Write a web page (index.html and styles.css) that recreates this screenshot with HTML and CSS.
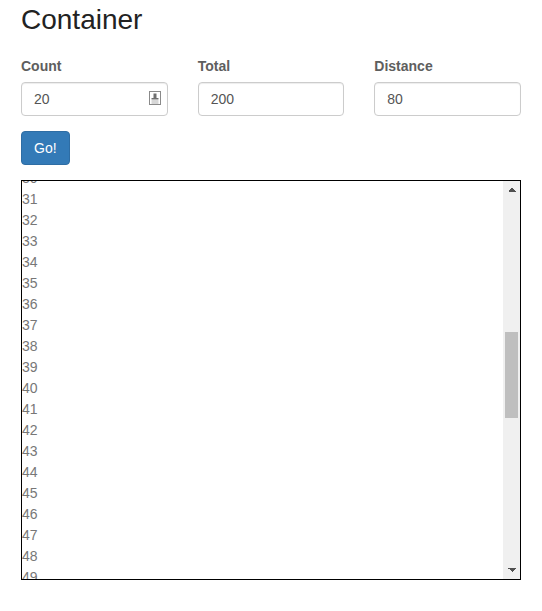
FILE: index.html
```html
<!DOCTYPE html>
<html>
<head>
<meta charset="utf-8">
<title>Container</title>
<link rel="stylesheet" href="styles.css">
</head>
<body>
<h1 class="title">Container</h1>
<form class="fields">
  <div class="field">
    <label class="label">Count</label>
    <div class="input-wrap">
      <input class="input" type="text" value="20">
      <svg class="contact-icon" width="13" height="15" viewBox="0 0 13 15">
        <rect x="0.5" y="0.5" width="11" height="13" fill="#fff" stroke="#8a8a8a"/>
        <rect x="4.5" y="2.5" width="3" height="4.5" fill="#6f6f6f"/>
        <rect x="2.5" y="7" width="7" height="1.5" fill="#6f6f6f"/>
        <rect x="2.5" y="9.5" width="7" height="1" fill="#b0b0b0"/>
        <rect x="2.5" y="11.5" width="7" height="1" fill="#b0b0b0"/>
      </svg>
    </div>
  </div>
  <div class="field">
    <label class="label">Total</label>
    <input class="input" type="text" value="200">
  </div>
  <div class="field">
    <label class="label">Distance</label>
    <input class="input" type="text" value="80">
  </div>
</form>
<button class="btn" type="button">Go!</button>
<div class="box">
  <div class="viewport" id="list"></div>
  <div class="scrollbar">
    <div class="sb-btn sb-up"></div>
    <div class="sb-track"><div class="sb-thumb" style="margin-top:134px;height:86px"></div></div>
    <div class="sb-btn sb-down"></div>
  </div>
</div>
<script src="app.js"></script>
</body>
</html>
```

FILE: styles.css
```css
html, body {
  margin: 0;
  padding: 0;
}
body {
  font-family: "Liberation Sans", Arial, sans-serif;
  font-size: 14px;
  line-height: 20px;
  color: #333;
  background: #fff;
  padding: 0 21px;
}
.title {
  font-size: 28px;
  font-weight: normal;
  line-height: 1.1;
  margin: 5px 0 20px;
  color: #222;
}
.fields {
  display: grid;
  grid-template-columns: repeat(3, 1fr);
  column-gap: 30px;
  width: 500px;
  margin: 0 0 15px;
}
.field {
  display: flex;
  flex-direction: column;
}
.label {
  font-weight: bold;
  color: #5e5e5e;
  margin-bottom: 6px;
}
.input-wrap {
  position: relative;
}
.input {
  box-sizing: border-box;
  width: 100%;
  height: 34px;
  padding: 6px 12px;
  font-family: inherit;
  font-size: 14px;
  color: #555;
  border: 1px solid #ccc;
  border-radius: 4px;
  box-shadow: inset 0 1px 1px rgba(0,0,0,.075);
  outline: none;
  background: #fff;
}
.contact-icon {
  position: absolute;
  right: 6px;
  top: 9.5px;
}
.btn {
  display: block;
  box-sizing: border-box;
  height: 34px;
  padding: 6px 12px;
  font-family: inherit;
  font-size: 14px;
  color: #fff;
  background: #337ab7;
  border: 1px solid #2e6da4;
  border-radius: 4px;
  margin: 0 0 15px;
}
.box {
  box-sizing: border-box;
  display: flex;
  width: 500px;
  height: 400px;
  border: 1px solid #000;
}
.viewport {
  flex: 1;
  overflow: hidden;
  color: #777;
  font-size: 14px;
  line-height: 21px;
}
.row {
  height: 21px;
}
.scrollbar {
  width: 17px;
  display: flex;
  flex-direction: column;
  background: #f0f0f0;
}
.sb-btn {
  height: 17px;
  flex: none;
  background-repeat: no-repeat;
}
.sb-up {
  background-image:
    linear-gradient(to top left, #505050 50%, transparent 50%),
    linear-gradient(to top right, #505050 50%, transparent 50%);
  background-size: 4px 4px, 4px 4px;
  background-position: 4.5px 7px, 8.5px 7px;
}
.sb-down {
  background-image:
    linear-gradient(to bottom left, #505050 50%, transparent 50%),
    linear-gradient(to bottom right, #505050 50%, transparent 50%);
  background-size: 4px 4px, 4px 4px;
  background-position: 4.5px 6px, 8.5px 6px;
}
.sb-track {
  flex: 1;
  display: flex;
  flex-direction: column;
}
.sb-thumb {
  margin-left: 2px;
  margin-right: 2px;
  background: #bfbfbf;
}
```

FILE: app.js
```js
var list = document.getElementById('list');
for (var i = 1; i <= 80; i++) {
  var row = document.createElement('div');
  row.className = 'row';
  row.textContent = String(i);
  list.appendChild(row);
}
list.scrollTop = 622;
```
